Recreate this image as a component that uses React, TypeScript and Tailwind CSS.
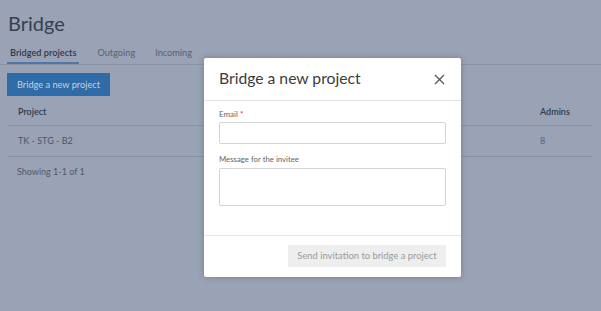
import React from "react";

const font = { fontFamily: 'Lato, "Noto Sans", sans-serif' };

function Page() {
  return (
    <div className="h-[311px] w-[601px] bg-[#9aa3b5] text-[#3a4455]">
      <h1 className="px-2 pt-[10px] text-[20px] leading-[26px] text-[#363f4d]">Bridge</h1>
      <div className="mt-[10px] flex border-b border-[#8a93a6] px-[7px] text-[9.2px] leading-[14px]">
        <div className="border-b-2 border-[#4c77a6] px-[3px] pb-[2px] font-semibold text-[#2f3948]">Bridged projects</div>
        <div className="ml-[18px] text-[#566073]">Outgoing</div>
        <div className="ml-[20px] text-[#566073]">Incoming</div>
      </div>
      <div className="px-[7px] pt-[8px]">
        <div className="flex h-[23px] w-[103px] items-center justify-center bg-[#2f6ba6] text-[9.2px] text-[#c3d2e4]">
          Bridge a new project
        </div>
      </div>
      <div className="mx-[8px] mt-[2px] text-[9px]">
        <div className="flex h-[28px] items-center border-b border-[#8a93a6] px-[10px] font-semibold text-[#2f3948]">
          <span className="flex-1">Project</span>
          <span className="w-[43px]">Admins</span>
        </div>
        <div className="flex h-[31px] items-center border-b border-[#8a93a6] px-[10px] text-[#4a5466]">
          <span className="flex-1">TK - STG - B2</span>
          <span className="w-[43px] text-[#4f6482]">8</span>
        </div>
        <div className="flex h-[30px] items-center px-[9px] text-[#4f596b]">Showing 1-1 of 1</div>
      </div>
    </div>
  );
}

function Modal() {
  return (
    <div className="absolute left-[204px] top-[58px] w-[257px] rounded-[2px] bg-white shadow-[0_0_6px_rgba(0,0,0,0.25)]">
      <div className="flex h-[43px] items-center justify-between border-b border-[#e2e2e2] pl-[15px] pr-[16px]">
        <span className="text-[15.7px] text-[#3c3c3c]">Bridge a new project</span>
        <svg width="11" height="11" viewBox="0 0 11 11" className="text-[#555]">
          <path d="M1 1L10 10M10 1L1 10" stroke="currentColor" strokeWidth="1.3" fill="none" />
        </svg>
      </div>
      <div className="px-[15px] pt-[7px] pb-[29px]">
        <div className="text-[8px] leading-[12px] text-[#666]">
          Email <span className="text-[#d33]">*</span>
        </div>
        <div className="mt-[2px] h-[22px] rounded-[2px] border border-[#d4d4d4]" />
        <div className="mt-[9px] text-[7.8px] leading-[12px] text-[#666]">Message for the invitee</div>
        <div className="mt-[3px] h-[38px] rounded-[2px] border border-[#d4d4d4]" />
      </div>
      <div className="flex justify-end border-t border-[#e6e6e6] px-[15px] pt-[9px] pb-[10px]">
        <div className="flex h-[22px] w-[158px] items-center justify-center bg-[#eeeeee] text-[9.4px] text-[#9a9a9a]">
          Send invitation to bridge a project
        </div>
      </div>
    </div>
  );
}

export default function App() {
  return (
    <div className="relative h-[311px] w-[601px] overflow-hidden" style={font}>
      <Page />
      <Modal />
    </div>
  );
}
